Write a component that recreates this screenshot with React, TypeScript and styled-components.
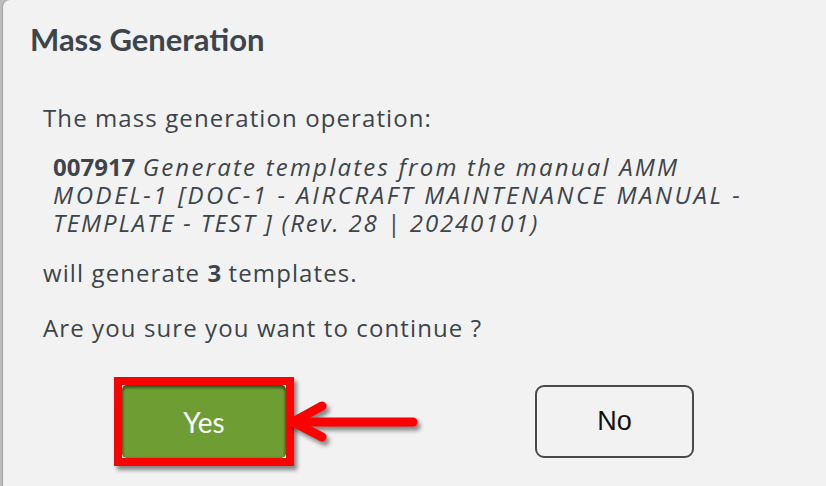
import React from "react";
import styled, { createGlobalStyle } from "styled-components";

const Global = createGlobalStyle`
  html, body { margin: 0; padding: 0; }
  body {
    width: 826px;
    height: 486px;
    overflow: hidden;
    background: #bdbdbd;
    font-family: "Open Sans", "Lato", sans-serif;
  }
`;

const Page = styled.div`
  display: flex;
  width: 826px;
  height: 486px;
  padding-left: 3px;
  box-sizing: border-box;
`;

const Dialog = styled.section`
  flex: 1;
  background: #f2f2f2;
  border-top-left-radius: 7px;
  box-shadow: -1px 0 1px rgba(0, 0, 0, 0.15);
  padding: 21px 0 0 0;
  color: #3c444c;
  display: flex;
  flex-direction: column;
`;

const Title = styled.h1`
  margin: 0 0 47px 27px;
  font-family: "Lato", "Open Sans", sans-serif;
  font-size: 31px;
  line-height: 36px;
  font-weight: 700;
`;

const Body = styled.div`
  padding-left: 40px;
  display: flex;
  flex-direction: column;
  font-size: 24px;
  line-height: 28px;
  letter-spacing: 1.1px;
`;

const Para = styled.p<{ $gap?: number }>`
  margin: ${(p) => p.$gap ?? 0}px 0 0 0;
  white-space: nowrap;
`;

const Quote = styled.div`
  margin: 21px 0 0 10px;
  display: flex;
  flex-direction: column;
`;

const QuoteLine = styled.div`
  white-space: nowrap;
`;

const Code = styled.strong`
  font-weight: 700;
  letter-spacing: 0;
`;

const Desc = styled.em<{ $track: number }>`
  font-style: italic;
  letter-spacing: ${(p) => p.$track}px;
`;

const Buttons = styled.div`
  display: flex;
  align-items: flex-start;
  gap: 249px;
  padding-left: 119px;
  margin-top: 43px;
`;

const Highlighted = styled.div`
  position: relative;
  display: flex;
`;

const Ring = styled.div`
  position: absolute;
  inset: -8px;
  border: 8px solid #ff0000;
  box-shadow: 3px 4px 4px rgba(0, 0, 0, 0.45);
  pointer-events: none;
`;

const Arrow = styled.svg`
  position: absolute;
  left: 160px;
  top: 8px;
  overflow: visible;
  filter: drop-shadow(3px 4px 2px rgba(0, 0, 0, 0.45));
`;

const YesButton = styled.button`
  width: 164px;
  height: 73px;
  border: none;
  border-radius: 5px;
  background: #6e9e33;
  box-shadow: inset 0 3px 3px rgba(0, 0, 0, 0.45), inset 2px 0 2px rgba(0, 0, 0, 0.15),
    inset -2px 0 2px rgba(0, 0, 0, 0.15);
  color: #ffffff;
  font-family: "Lato", "Open Sans", sans-serif;
  font-size: 28px;
  padding: 0;
`;

const NoButton = styled.button`
  width: 159px;
  height: 73px;
  border: 2px solid #4a4a4a;
  border-radius: 9px;
  background: #f2f2f2;
  color: #111111;
  font-family: "Liberation Sans", Arial, sans-serif;
  font-size: 27px;
  padding: 0;
  box-sizing: border-box;
`;

export default function App() {
  return (
    <>
      <Global />
      <Page>
        <Dialog>
          <Title>Mass Generation</Title>
          <Body>
            <Para>The mass generation operation:</Para>
            <Quote>
              <QuoteLine>
                <Code>007917</Code> <Desc $track={2.2}>Generate templates from the manual AMM</Desc>
              </QuoteLine>
              <QuoteLine>
                <Desc $track={2.58}>MODEL-1 [DOC-1 - AIRCRAFT MAINTENANCE MANUAL -</Desc>
              </QuoteLine>
              <QuoteLine>
                <Desc $track={1.85}>TEMPLATE - TEST ] (Rev. 28 | 20240101)</Desc>
              </QuoteLine>
            </Quote>
            <Para $gap={22}>
              will generate <Code>3</Code> templates.
            </Para>
            <Para $gap={27}>Are you sure you want to continue ?</Para>
          </Body>
          <Buttons>
            <Highlighted>
              <YesButton>Yes</YesButton>
              <Ring />
              <Arrow width="130" height="60" viewBox="0 0 130 60">
                <g stroke="#ff0000" strokeWidth="9" strokeLinecap="round" strokeLinejoin="round" fill="none">
                  <line x1="11" y1="29" x2="131" y2="29" />
                  <polyline points="40,13 11,29 40,44" />
                </g>
              </Arrow>
            </Highlighted>
            <NoButton>No</NoButton>
          </Buttons>
        </Dialog>
      </Page>
    </>
  );
}
